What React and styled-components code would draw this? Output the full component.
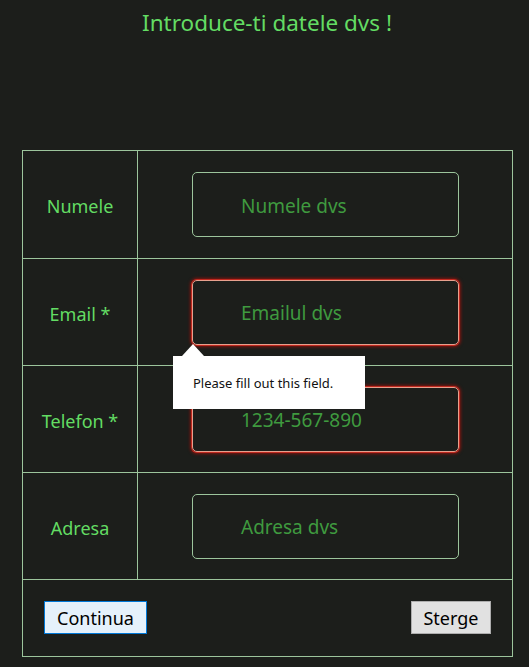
import styled, { createGlobalStyle } from "styled-components";

const GlobalStyle = createGlobalStyle`
  html, body {
    margin: 0;
    background: #1c1e1b;
  }
  body {
    font-family: "Noto Sans", "Open Sans", sans-serif;
  }
`;

const S = {};

S.Page = styled.main`
  min-height: 667px;
  padding-top: 9px;
  box-sizing: border-box;
`;

S.Title = styled.h1`
  margin: 0 0 113px;
  text-align: center;
  font-weight: 400;
  font-size: 22.5px;
  line-height: 28px;
  color: #63dc63;
  padding-left: 5px;
`;

S.Table = styled.table`
  margin-left: 22px;
  width: 491px;
  border-collapse: collapse;
  border: 1px solid #9cc59c;
`;

S.Row = styled.tr`
  height: ${(p) => (p.$first ? "108px" : "107px")};
  border-bottom: 1px solid #9cc59c;
`;

S.Label = styled.td`
  width: 114px;
  border-right: 1px solid #9cc59c;
  text-align: center;
  color: #63dc63;
  font-size: 18px;
  padding: 3px 0 0;
`;

S.Cell = styled.td`
  padding: 0 0 0 54px;
  position: relative;
`;

S.Input = styled.div`
  width: 267px;
  height: 65px;
  box-sizing: border-box;
  border: 1px solid ${(p) => (p.$invalid ? "#e7a08e" : "#9cc59c")};
  border-radius: 5px;
  box-shadow: ${(p) => (p.$invalid ? "0 0 0 1px #c0281e, 0 0 3px 2px #7a1510" : "none")};
  display: flex;
  align-items: center;
  padding: 2px 0 0 48px;
  color: #3f9a3f;
  font-size: 19px;
`;

S.Footer = styled.td`
  height: 75px;
  padding: 0 21px 1px;
`;

S.Buttons = styled.div`
  display: flex;
  justify-content: space-between;
  align-items: center;
`;

S.Button = styled.button`
  height: 33px;
  padding: 0 ${(p) => (p.$primary ? "12px" : "11px")};
  min-width: ${(p) => (p.$primary ? "102px" : "80px")};
  font-family: "Noto Sans", sans-serif;
  font-size: 18px;
  color: #000;
  background: ${(p) => (p.$primary ? "#e5f1fb" : "#e1e1e1")};
  border: 1px solid ${(p) => (p.$primary ? "#0078d7" : "#adadad")};
  border-radius: 0;
`;

S.Tooltip = styled.div`
  position: absolute;
  left: 35px;
  top: 97px;
  width: 192px;
  height: 53px;
  background: #fff;
  color: #111;
  font-size: 13px;
  display: flex;
  align-items: center;
  padding-left: 20px;
  box-sizing: border-box;
  z-index: 2;

  &::before {
    content: "";
    position: absolute;
    left: 9px;
    top: -12px;
    border-left: 11px solid transparent;
    border-right: 11px solid transparent;
    border-bottom: 12px solid #fff;
  }
`;

const fields = [
  { label: "Numele", placeholder: "Numele dvs" },
  { label: "Email *", placeholder: "Emailul dvs", invalid: true, tip: true },
  { label: "Telefon *", placeholder: "1234-567-890", invalid: true },
  { label: "Adresa", placeholder: "Adresa dvs" },
];

const App = () => {
  return (
    <S.Page>
      <GlobalStyle />
      <S.Title>Introduce-ti datele dvs !</S.Title>
      <S.Table>
        <tbody>
          {fields.map((f, i) => (
            <S.Row key={f.label} $first={i === 0}>
              <S.Label>{f.label}</S.Label>
              <S.Cell>
                <S.Input $invalid={f.invalid}>{f.placeholder}</S.Input>
                {f.tip && <S.Tooltip>Please fill out this field.</S.Tooltip>}
              </S.Cell>
            </S.Row>
          ))}
          <tr>
            <S.Footer colSpan={2}>
              <S.Buttons>
                <S.Button $primary>Continua</S.Button>
                <S.Button>Sterge</S.Button>
              </S.Buttons>
            </S.Footer>
          </tr>
        </tbody>
      </S.Table>
    </S.Page>
  );
};

export default App;
